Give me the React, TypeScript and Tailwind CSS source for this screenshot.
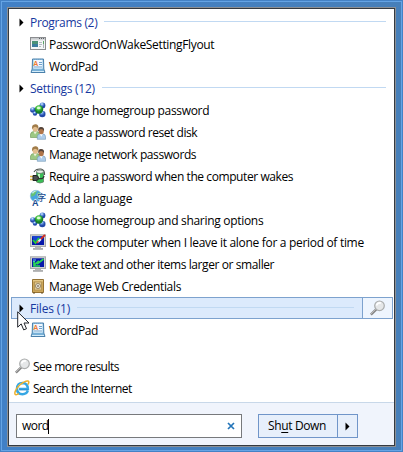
import type { ReactNode } from "react";

const svgProps = { width: 16, height: 16, viewBox: "0 0 16 16" };

function WindowIcon() {
  return (
    <svg {...svgProps}>
      <rect x=".5" y="1.5" width="15" height="12" fill="#f5f7f8" stroke="#8b8d90" />
      <path d="M1 2.5h14" stroke="#c7cacd" />
      <path d="M9 2.5h1M11 2.5h1M13 2.5h1" stroke="#5d6266" />
      <path d="M1 3.8h14" stroke="#a9adb0" strokeWidth=".6" />
      <rect x="2" y="5" width="6" height="6" fill="#3c7d9e" />
      <rect x="2" y="5" width="6" height="3" fill="#4b9277" />
      <path d="M9 6.5h3M9 8.5h3M9 10.5h2" stroke="#b4bcc0" />
      <path d="M13.5 5v3" stroke="#5ba565" />
      <path d="M13.5 8v4" stroke="#aeb4b8" />
    </svg>
  );
}

function WordPadIcon() {
  return (
    <svg {...svgProps}>
      <path d="M2.5 1h11l.3 10 1.200 3.500H1l1.200-3.500z" fill="#8fc3e6" stroke="#4a80ab" />
      <path d="M3.500 2h9v8.500h-9z" fill="#f1f8fe" />
      <path d="M3 .8h10" stroke="#a9c4d8" strokeDasharray="1 1" />
      <text x="3.300" y="8" fontSize="7" fontWeight="700" fontFamily="Liberation Sans, sans-serif" fill="#ef7c32">A</text>
      <path d="M9 4.500h3M9 6.500h3M4 9h8" stroke="#6ea1cc" />
      <path d="M2 12h12" stroke="#5794c0" strokeWidth=".8" />
      <path d="M2 13.500h12" stroke="#d4edfa" />
    </svg>
  );
}

function HomegroupIcon() {
  return (
    <svg {...svgProps}>
      <defs>
        <radialGradient id="blueBall" cx=".4" cy=".25"><stop stopColor="#dcecff" /><stop offset=".5" stopColor="#5c8fdc" /><stop offset="1" stopColor="#2449a8" /></radialGradient>
        <radialGradient id="greenBall" cx=".45" cy=".3"><stop stopColor="#d2ffc9" /><stop offset=".5" stopColor="#45c340" /><stop offset="1" stopColor="#157c2a" /></radialGradient>
      </defs>
      <path d="M3 9 12 3v9z" fill="none" stroke="#9db9df" strokeWidth="1.500" />
      <circle cx="12.500" cy="3.500" r="2.900" fill="url(#blueBall)" />
      <circle cx="2.900" cy="8" r="2.800" fill="url(#blueBall)" />
      <circle cx="5" cy="11.500" r="2.200" fill="url(#blueBall)" />
      <circle cx="12.300" cy="12" r="3.200" fill="url(#blueBall)" />
      <circle cx="9" cy="7.500" r="4.200" fill="url(#greenBall)" />
      <ellipse cx="8.700" cy="6" rx="2" ry="1.300" fill="#e7ffe2" opacity=".8" />
    </svg>
  );
}

function UsersIcon() {
  return (
    <svg {...svgProps}>
      <path d="M.5 13.500v-3.300Q1 7.500 4 7.400h2.500q3 .2 3 3v3.100z" fill="#9cc884" stroke="#6b9556" strokeWidth=".6" />
      <path d="M3.500 7.500 5 10.500 7 7.500" fill="#eef4dc" />
      <ellipse cx="5.300" cy="4.200" rx="2.800" ry="3.500" fill="#e3bd8d" />
      <path d="M2.200 5.200Q1.300.5 5.300.3 9.200.4 8.300 5 7.400 3 5 2.800 3.500 3 2.200 5.200" fill="#a17c49" />
      <path d="M7.300 15.300v-3Q7.700 10 10 9.800h2.500q3 .2 3 3v2.500z" fill="#aecdeb" stroke="#7195b4" strokeWidth=".6" />
      <path d="m9.700 9.800 1.600 3 1.500-3" fill="#fff" />
      <ellipse cx="11.200" cy="6.900" rx="2.600" ry="3.300" fill="#b07549" />
      <path d="M8.300 7.200Q7.800 3.100 11 3 14.600 3.100 14 7.200 13 5 11 5 9.500 5 8.300 7.200" fill="#54443b" />
    </svg>
  );
}

function PowerIcon() {
  return (
    <svg {...svgProps}>
      <path d="M4 4Q6 .5 11 1q4 1 3.500 6" fill="none" stroke="#4e5450" strokeWidth="1.100" />
      <path d="M6.500 4h7v10q-3.500 2-7 0z" fill="#39bf55" stroke="#5d8065" strokeWidth=".8" />
      <ellipse cx="10" cy="3.700" rx="3.500" ry="1.700" fill="#e7efe7" stroke="#56665a" strokeWidth=".7" />
      <path d="M9 6v4" stroke="#c3f8c1" strokeWidth="2" />
      <path d="M0 8.500h3M0 11.500h3" stroke="#d8ad36" strokeWidth="1.300" />
      <path d="M3 7.500h3q2.500 0 2.500 2.500T6 12.500H3z" fill="#4c514f" stroke="#202522" />
      <path d="M8.500 10.500q5 1 5.500-2.500" fill="none" stroke="#303331" strokeWidth="1.300" />
    </svg>
  );
}

function LanguageIcon() {
  return (
    <svg {...svgProps} className="overflow-visible">
      <circle cx="6" cy="6" r="5.700" fill="#49a5df" stroke="#84bddf" strokeWidth=".6" />
      <path d="M1 4Q4 0 7 1L5 5 1.500 7zM8 2l3 2-1 3-3-1z" fill="#65c273" />
      <path d="M2 2.500Q5-.5 8 1 4 1.300 3 4z" fill="#dff9ff" opacity=".8" />
      <text x="2" y="15.500" fontSize="9" fontWeight="700" fontFamily="Liberation Sans, sans-serif" fill="#17488d" stroke="#fff" strokeWidth="1" paintOrder="stroke">A</text>
      <text x="7.200" y="10.500" fontSize="8.800" fontWeight="500" fontFamily="Noto Sans CJK SC, sans-serif" fill="#174c91" stroke="#fff" strokeWidth=".7" paintOrder="stroke">字</text>
    </svg>
  );
}

function MonitorIcon({ children }: { children: ReactNode }) {
  return (
    <svg {...svgProps}>
      <path d="M5 12h6v2h2v1.500H3V14h2z" fill="#b7b8b8" />
      <path d="M3 15.200h10" stroke="#898c8d" strokeWidth=".6" />
      <rect x=".5" y=".8" width="15" height="11.700" fill="#cfd1d1" stroke="#a8abac" />
      <rect x="2" y="2.300" width="12" height="8.700" fill="#0718aa" />
      {children}
    </svg>
  );
}

function PersonalizeIcon() {
  return (
    <MonitorIcon>
      <path d="M2 2.300h12L8 8 4 7z" fill="#1643d2" />
      <path d="m3 6 2.500 3L9 4" fill="none" stroke="#23cf37" strokeWidth="1.700" />
      <path d="m8 8 3-3" stroke="#e9edf3" strokeWidth="1.900" />
      <path d="m10.800 5 4.200-4" stroke="#d52e22" strokeWidth="1.800" />
      <path d="m6.800 9.200 1.500-2" stroke="#e54a35" strokeWidth="1.400" />
    </MonitorIcon>
  );
}

function ResizeIcon() {
  return (
    <MonitorIcon>
      <path d="M3 4h3M3 5.500h2" stroke="#65cdeb" />
      <path d="M13.500 3 7 8.200M4 5.500V10h6M4 9l5-4" fill="none" stroke="#2bd454" strokeWidth="1.700" />
    </MonitorIcon>
  );
}

function VaultIcon() {
  return (
    <svg {...svgProps}>
      <path d="M2.500 1.500h11v13h-11z" fill="#cba65a" stroke="#967334" />
      <path d="M3 2h10v1.500H3z" fill="#e4c886" />
      <rect x="4.500" y="4" width="7" height="8" fill="#e3ca91" stroke="#a98b4d" strokeWidth=".7" />
      <circle cx="8" cy="8" r="2.500" fill="#ece8dd" stroke="#8b7b5b" strokeWidth=".9" />
      <circle cx="8" cy="8" r="1" fill="#887b65" />
      <path d="M3 15h2M11 15h2" stroke="#695023" />
    </svg>
  );
}

function Magnifier() {
  return (
    <svg {...svgProps}>
      <path d="m.9 14.700 5.600-5.500" stroke="#858585" strokeWidth="2.500" />
      <path d="m1 14 5-5" stroke="#c5c5c5" strokeWidth=".8" />
      <circle cx="9.500" cy="5.800" r="4.800" fill="#e5e7e8" stroke="#aaacac" strokeWidth="1.200" />
      <path d="M6.500 5.500Q7.500 2.300 11 3" fill="none" stroke="#fff" strokeWidth="1.500" />
    </svg>
  );
}

function ExplorerIcon() {
  return (
    <svg {...svgProps}>
      <path d="M13.800 10.700Q12.600 14.200 8.500 14.200 3 14 3 8.700 3.200 3.200 8.500 3q5.300.2 5.400 6H5" fill="none" stroke="#36a7e4" strokeWidth="2.500" />
      <path d="M4 6Q5.500 3.300 9 3.300" fill="none" stroke="#91dafa" />
      <path d="M5.500 9.800h9" stroke="#2583c5" strokeWidth=".7" />
      <path d="M13.900 4.500Q15.700 1.600 14 1 11.500.4 6.300 4.500 1.500 8.800.8 13 .8 16 5 13.700" fill="none" stroke="#edb02a" strokeWidth="1.500" />
    </svg>
  );
}

function Arrow() {
  return <svg width="5" height="9" viewBox="0 0 5 9"><path d="M.5.500 4.500 4.500.5 8.500z" fill="#000" /></svg>;
}

function Section({ text, tracking }: { text: string; tracking: string }) {
  return (
    <>
      <span className="mt-px ml-[10px] w-[11px] shrink-0"><Arrow /></span>
      <span className={`mt-[2px] shrink-0 text-[#1638a0] ${tracking}`}>{text}</span>
      <span className="mr-2 mb-[2px] ml-[7px] h-px flex-1 bg-[#c1d9f2]" />
    </>
  );
}

function Item({ icon, text, tracking }: { icon: ReactNode; text: string; tracking: string }) {
  return (
    <div className="flex h-[22px] items-center pl-[21px]">
      <span className="w-[19px] shrink-0">{icon}</span>
      <span className={`mt-[2px] whitespace-nowrap ${tracking}`}>{text}</span>
    </div>
  );
}

const settings = [
  { icon: <HomegroupIcon />, text: "Change homegroup password", tracking: "tracking-[-0.33px]" },
  { icon: <UsersIcon />, text: "Create a password reset disk", tracking: "tracking-[-0.46px]" },
  { icon: <UsersIcon />, text: "Manage network passwords", tracking: "tracking-[-0.41px]" },
  { icon: <PowerIcon />, text: "Require a password when the computer wakes", tracking: "tracking-[-0.42px]" },
  { icon: <LanguageIcon />, text: "Add a language", tracking: "tracking-[-0.2px]" },
  { icon: <HomegroupIcon />, text: "Choose homegroup and sharing options", tracking: "tracking-[-0.3px]" },
  { icon: <PersonalizeIcon />, text: "Lock the computer when I leave it alone for a period of time", tracking: "tracking-[-0.31px]" },
  { icon: <ResizeIcon />, text: "Make text and other items larger or smaller", tracking: "tracking-[-0.41px]" },
  { icon: <VaultIcon />, text: "Manage Web Credentials", tracking: "tracking-[-0.34px]" },
];

export default function App() {
  return (
    <div className="relative h-[452px] w-[403px] bg-[#4482c6] p-px font-['Open_Sans','Noto_Sans',sans-serif] text-[12px] leading-[22px] text-black [&_svg]:block">
      <div className="h-[450px] border border-[#65a4e5] bg-linear-to-r from-[#4180c6] to-[#477fb9] p-[5px]">
        <div className="h-[440px] w-[389px] border border-[#8c9095]">
          <div className="flex h-[438px] flex-col border border-[#343940] bg-white pt-[2px]">
            <div className="flex h-[22px] items-center"><Section text="Programs (2)" tracking="tracking-[-0.33px]" /></div>
            <Item icon={<WindowIcon />} text="PasswordOnWakeSettingFlyout" tracking="tracking-[-0.34px]" />
            <Item icon={<WordPadIcon />} text="WordPad" tracking="tracking-[-0.4px]" />
            <div className="flex h-[22px] items-center"><Section text="Settings (12)" tracking="tracking-[-0.28px]" /></div>
            {settings.map((item) => <Item key={item.text} {...item} />)}
            <div className="mr-px ml-[2px] flex h-[22px] border border-[#7da2ce] bg-[#dceafc]">
              <div className="-ml-[3px] flex flex-1 items-center"><Section text="Files (1)" tracking="tracking-[-0.2px]" /></div>
              <div className="flex w-[30px] items-center justify-center border-l border-[#7da2ce] bg-[#eef5fe]"><Magnifier /></div>
            </div>
            <Item icon={<WordPadIcon />} text="WordPad" tracking="tracking-[-0.4px]" />
            <div className="mt-[14px] flex h-[22px] items-center pl-[6px]">
              <span className="w-[18px]"><Magnifier /></span><span className="mt-[2px] tracking-[-0.5px]">See more results</span>
            </div>
            <div className="flex h-[22px] items-center pl-[5px]">
              <span className="w-[19px]"><ExplorerIcon /></span><span className="mt-[2px] tracking-[-0.46px]">Search the Internet</span>
            </div>
            <div className="mt-[3px] flex flex-1 items-start border-t border-[#c8d8e9] bg-[#f0f4fc] pt-[11px] pl-[7px]">
              <div className="flex h-6 w-[226px] items-center border border-[#77797c] bg-white pl-[5px]">
                <span className="tracking-[-0.57px]">word</span>
                <span className="h-[15px] w-px bg-black" />
                <svg className="mr-[6px] ml-auto" width="8" height="8" viewBox="0 0 8 8"><path d="m1 1 6 6M7 1 1 7" stroke="#2475b9" strokeWidth="1.700" /></svg>
              </div>
              <div className="ml-4 flex h-6 w-[100px] border border-[#7095c9] bg-[#e7effb]">
                <span className="w-[78px] pl-[9px] tracking-[-0.36px]">Sh<u className="underline-offset-2">u</u>t Down</span>
                <span className="flex flex-1 items-center justify-center border-l border-[#7095c9]"><Arrow /></span>
              </div>
            </div>
          </div>
        </div>
      </div>
      <svg className="absolute top-[311px] left-[17px]" width="13" height="20" viewBox="0 0 13 20">
        <path d="M.7.800v15.400l3.500-3.300 2.500 6 2.800-1.200L7 12h5z" fill="#fff" stroke="#20242a" />
      </svg>
    </div>
  );
}
